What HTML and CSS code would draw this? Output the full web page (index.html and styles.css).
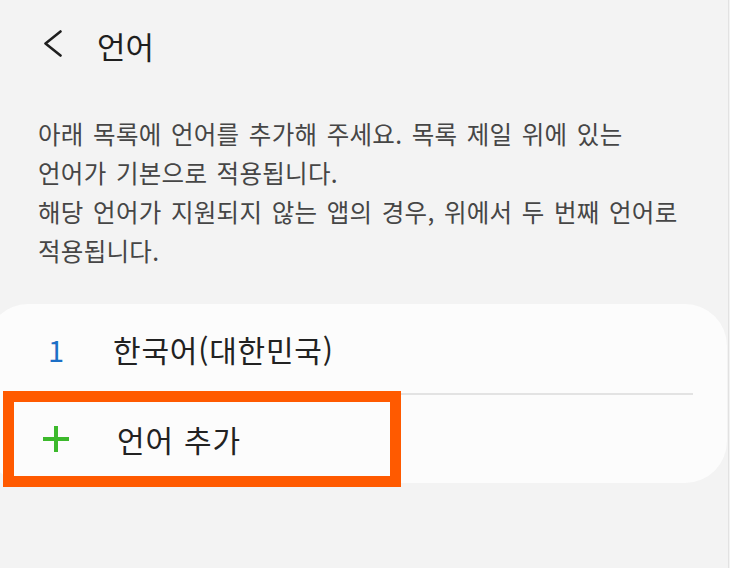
FILE: index.html
```html
<!DOCTYPE html>
<html lang="ko">
<head>
<meta charset="UTF-8" />
<meta name="viewport" content="width=device-width, initial-scale=1" />
<title>언어</title>
<link rel="stylesheet" href="styles.css">
</head>
<body>
<div class="screen">
  <header class="top-bar">
    <button class="back" aria-label="뒤로">
      <svg width="20" height="28" viewBox="0 0 20 28">
        <path d="M17.5 1.5 L2.5 13.5 L17.5 25.5" fill="none" stroke="#1f1f1f" stroke-width="2.6" stroke-linecap="round" stroke-linejoin="round"/>
      </svg>
    </button>
    <h1>언어</h1>
  </header>

  <p class="desc">
    아래 목록에 언어를 추가해 주세요. 목록 제일 위에 있는<br>
    언어가 기본으로 적용됩니다.<br>
    해당 언어가 지원되지 않는 앱의 경우, 위에서 두 번째 언어로<br>
    적용됩니다.
  </p>

  <section class="lang-card">
    <div class="lang-row">
      <span class="lang-num">1</span>
      <span class="lang-name">한국어(대한민국)</span>
    </div>
    <div class="divider"></div>
    <div class="lang-row add-row">
      <svg class="plus" width="28" height="28" viewBox="0 0 28 28">
        <path d="M14 1 V27 M1 14 H27" stroke="#3cb92c" stroke-width="4"/>
      </svg>
      <span class="lang-name">언어 추가</span>
    </div>
  </section>

  <!-- 강조 표시 박스 -->
  <div class="highlight"></div>
</div>
</body>
</html>
```

FILE: styles.css
```css
body {
  margin: 0;
  padding: 0;
  background: #f3f3f3;
  font-family: "Noto Sans CJK KR", "Noto Sans", sans-serif;
  overflow: hidden;
}
.screen {
  position: relative;
  width: 728px;
  height: 568px;
  border-right: 1px solid #e2e2e2;
}
.top-bar {
  height: 90px;
  display: flex;
  align-items: center;
  padding-left: 43px;
}
.back {
  background: none;
  border: none;
  padding: 0;
  width: 20px;
  height: 28px;
  display: flex;
  margin-top: -2px;
}
.top-bar h1 {
  margin: 0 0 0 34px;
  font-size: 31px;
  font-weight: 400;
  color: #1e1e1e;
  line-height: 1;
}
.desc {
  margin: 24px 0 0;
  padding: 0 38px;
  font-size: 24.5px;
  line-height: 39px;
  letter-spacing: 0.3px;
  word-spacing: 2.2px;
  color: #464646;
  white-space: nowrap;
}
.lang-card {
  margin: 34px 0 0 -14px;
  width: 741px;
  background: #fcfcfc;
  border-radius: 42px;
}
.lang-row {
  height: 89px;
  display: flex;
  align-items: center;
  padding-left: 62px;
}
.add-row {
  height: 88px;
  padding-left: 56px;
}
.lang-num {
  width: 65px;
  font-size: 29px;
  color: #1c6fc6;
}
.lang-name {
  font-size: 30px;
  letter-spacing: 0.8px;
  word-spacing: 1px;
  color: #222;
}
.plus {
  margin-right: 47px;
}
.divider {
  height: 2px;
  background: #e3e3e3;
  margin: 0 34px 0 54px;
}
.highlight {
  position: absolute;
  left: 3px;
  top: 391px;
  width: 398px;
  height: 96px;
  box-sizing: border-box;
  border: 11px solid #ff5a00;
}
```
